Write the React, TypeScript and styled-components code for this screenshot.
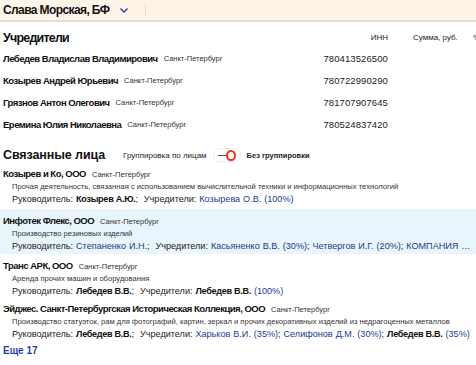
import { Fragment } from 'react';
import styled, { createGlobalStyle } from 'styled-components';

const Global = createGlobalStyle`
  html, body {
    margin: 0;
    padding: 0;
    background: #ffffff;
    overflow: hidden;
  }
  body {
    font-family: 'Liberation Sans', Arial, sans-serif;
    color: #111;
  }
`;

const Page = styled.div`
  width: 476px;
  height: 365px;
  overflow: hidden;
`;

const Header = styled.header`
  height: 20px;
  background: #fdf3e6;
  border-bottom: 2px solid #e6ded2;
  display: flex;
  align-items: center;
  padding-left: 3px;
  gap: 10px;
`;

const HeaderTitle = styled.h1`
  margin: 0;
  font-size: 12px;
  font-weight: 700;
  letter-spacing: -0.6px;
  color: #111;
`;

const Divider = styled.span`
  width: 1px;
  height: 12px;
  background: #e4ddd2;
  margin-left: 6px;
`;

const Content = styled.main`
  padding: 6px 0 0 3px;
`;

const SectionHead = styled.div`
  display: flex;
  align-items: center;
  height: 19px;
`;

const SectionTitle = styled.h2<{ $tight?: boolean }>`
  margin: 0;
  font-size: 12.5px;
  font-weight: 700;
  letter-spacing: ${p => (p.$tight ? '-0.8px' : '-0.1px')};
`;

const FoundersGrid = styled.div`
  width: 520px;
  display: grid;
  grid-template-columns: 1fr 66px 85px 50px;
  align-items: center;
`;

const ColHead = styled.div<{ $align?: string; $pad?: number }>`
  font-size: 8px;
  color: #222;
  text-align: ${p => p.$align || 'left'};
  padding-left: ${p => p.$pad || 0}px;
`;

const Cell = styled.div<{ $align?: string }>`
  height: 22px;
  display: flex;
  align-items: center;
  justify-content: ${p => (p.$align === 'right' ? 'flex-end' : 'flex-start')};
  white-space: nowrap;
`;

const Name = styled.span`
  font-size: 9.5px;
  font-weight: 700;
  letter-spacing: -0.5px;
`;

const City = styled.span`
  font-size: 7.5px;
  color: #333;
  margin-left: 6px;
`;

const Inn = styled.span`
  font-size: 9.5px;
  color: #222;
  letter-spacing: 0.1px;
`;

const RelatedHead = styled.div`
  display: flex;
  align-items: center;
  height: 24px;
  margin-top: 8px;
`;

const ToggleLabel = styled.span<{ $bold?: boolean }>`
  font-size: ${p => (p.$bold ? '7.5px' : '8px')};
  font-weight: ${p => (p.$bold ? 700 : 400)};
  color: #222;
`;

const ToggleWrap = styled.div`
  display: flex;
  align-items: center;
  gap: 6px;
  margin-left: 18px;
`;

const Switch = styled.div`
  width: 28px;
  height: 14px;
  border: 1px solid #eeeeee;
  border-radius: 8px;
  display: flex;
  align-items: center;
  justify-content: flex-end;
  padding: 0 4px;
  box-sizing: border-box;
`;

const SwitchLine = styled.span`
  width: 11px;
  height: 1px;
  background: #555;
`;

const SwitchKnob = styled.span`
  width: 7px;
  height: 7px;
  border: 2px solid #e8361f;
  border-radius: 50%;
  background: #fff;
`;

const Company = styled.div<{ $hl?: boolean }>`
  background: ${p => (p.$hl ? '#e8f5fc' : 'transparent')};
  margin-left: -3px;
  padding: ${p => (p.$hl ? '3px 0 1px 3px' : '0 0 0 3px')};
  margin-bottom: ${p => (p.$hl ? '5px' : '4px')};
  border-top: ${p => (p.$hl ? '1px solid #dcecf5' : 'none')};
`;

const CompanyTitle = styled.div`
  display: flex;
  align-items: baseline;
  height: 13px;
  line-height: 13px;
  white-space: nowrap;
`;

const Activity = styled.div`
  font-size: 7.6px;
  color: #333;
  padding-left: 9px;
  height: 13px;
  line-height: 13px;
  white-space: nowrap;
`;

const People = styled.div`
  font-size: 9.1px;
  color: #222;
  padding-left: 9px;
  height: 13px;
  line-height: 13px;
  white-space: nowrap;
  overflow: hidden;
  text-overflow: ellipsis;
  width: 464px;
  word-spacing: 0.4px;
`;

const Bold = styled.b`
  font-weight: 700;
  color: #111;
  letter-spacing: -0.3px;
  word-spacing: 0;
`;

const Link = styled.span`
  color: #233b8f;
`;

const More = styled.div`
  font-size: 10px;
  font-weight: 700;
  color: #1f3fa6;
  margin-top: 2px;
`;

const founders = [
  ['Лебедев Владислав Владимирович', '780413526500'],
  ['Козырев Андрей Юрьевич', '780722990290'],
  ['Грязнов Антон Олегович', '781707907645'],
  ['Еремина Юлия Николаевна', '780524837420'],
];

function Chevron() {
  return (
    <svg width="10" height="7" viewBox="0 0 10 7">
      <path d="M1.5 1.5 L5 5 L8.5 1.5" fill="none" stroke="#2a3f8f" strokeWidth="1.4" />
    </svg>
  );
}

export default function App() {
  return (
    <Page>
      <Global />
      <Header>
        <HeaderTitle>Слава Морская, БФ</HeaderTitle>
        <Chevron />
        <Divider />
      </Header>
      <Content>
        <FoundersGrid>
          <SectionHead>
            <SectionTitle $tight>Учредители</SectionTitle>
          </SectionHead>
          <ColHead $align="right">ИНН</ColHead>
          <ColHead $pad={25}>Сумма, руб.</ColHead>
          <ColHead>%</ColHead>
          {founders.map(([n, inn]) => (
            <Fragment key={n}>
              <Cell>
                <Name>{n}</Name>
                <City>Санкт-Петербург</City>
              </Cell>
              <Cell $align="right">
                <Inn>{inn}</Inn>
              </Cell>
              <Cell />
              <Cell />
            </Fragment>
          ))}
        </FoundersGrid>

        <RelatedHead>
          <SectionTitle>Связанные лица</SectionTitle>
          <ToggleWrap>
            <ToggleLabel>Группировка по лицам</ToggleLabel>
            <Switch>
              <SwitchLine />
              <SwitchKnob />
            </Switch>
            <ToggleLabel $bold>Без группировки</ToggleLabel>
          </ToggleWrap>
        </RelatedHead>

        <Company>
          <CompanyTitle>
            <Name>Козырев и Ко, ООО</Name>
            <City>Санкт-Петербург</City>
          </CompanyTitle>
          <Activity>Прочая деятельность, связанная с использованием вычислительной техники и информационных технологий</Activity>
          <People>
            Руководитель: <Bold>Козырев А.Ю.</Bold>;&nbsp; Учредители: <Link>Козырева О.В. (100%)</Link>
          </People>
        </Company>

        <Company $hl>
          <CompanyTitle>
            <Name>Инфотек Флекс, ООО</Name>
            <City>Санкт-Петербург</City>
          </CompanyTitle>
          <Activity>Производство резиновых изделий</Activity>
          <People>
            Руководитель: <Link>Степаненко И.Н.</Link>;&nbsp; Учредители: <Link>Касьяненко В.В. (30%)</Link>; <Link>Четвергов И.Г. (20%)</Link>; <Link>КОМПАНИЯ ИНФОТЕК (50%)</Link>
          </People>
        </Company>

        <Company>
          <CompanyTitle>
            <Name>Транс АРК, ООО</Name>
            <City>Санкт-Петербург</City>
          </CompanyTitle>
          <Activity>Аренда прочих машин и оборудования</Activity>
          <People>
            Руководитель: <Bold>Лебедев В.В.</Bold>;&nbsp; Учредители: <Bold>Лебедев В.В.</Bold> <Link>(100%)</Link>
          </People>
        </Company>

        <Company>
          <CompanyTitle>
            <Name>Эйджес. Санкт-Петербургская Историческая Коллекция, ООО</Name>
            <City>Санкт-Петербург</City>
          </CompanyTitle>
          <Activity>Производство статуэток, рам для фотографий, картин, зеркал и прочих декоративных изделий из недрагоценных металлов</Activity>
          <People>
            Руководитель: <Bold>Лебедев В.В.</Bold>;&nbsp; Учредители: <Link>Харьков В.И. (35%)</Link>; <Link>Селифонов Д.М. (30%)</Link>; <Bold>Лебедев В.В.</Bold> <Link>(35%)</Link>
          </People>
        </Company>

        <More>Еще 17</More>
      </Content>
    </Page>
  );
}
